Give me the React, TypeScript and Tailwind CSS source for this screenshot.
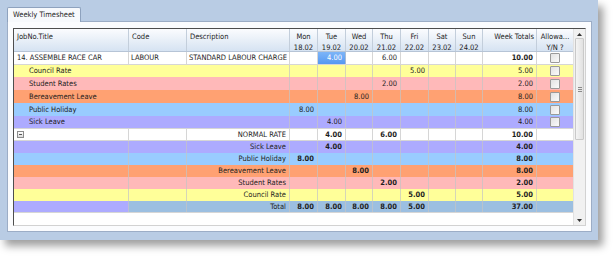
import type { ReactNode } from "react";

type Line = {
  label: string;
  color: string;
  days: (string | null)[];
  total: string;
  h: string;
};

const YELLOW = "bg-[#ffff99]";
const PINK = "bg-[#ffb9b9]";
const ORANGE = "bg-[#ffa172]";
const BLUE = "bg-[#99ccff]";
const LAVENDER = "bg-[#adabff]";

// Day columns are not quite even in the original grid.
const DAY_W = [
  "w-[28px]",
  "w-[28px]",
  "w-[27px]",
  "w-[28px]",
  "w-[28px]",
  "w-[27px]",
  "w-[27px]",
];

const DAYS = [
  ["Mon", "18.02"],
  ["Tue", "19.02"],
  ["Wed", "20.02"],
  ["Thu", "21.02"],
  ["Fri", "22.02"],
  ["Sat", "23.02"],
  ["Sun", "24.02"],
];

const at = (i: number, v: string) =>
  Array.from({ length: 7 }, (_, n) => (n === i ? v : null));

const detail: Line[] = [
  { label: "Council Rate", color: YELLOW, days: at(4, "5.00"), total: "5.00", h: "h-[12px]" },
  { label: "Student Rates", color: PINK, days: at(3, "2.00"), total: "2.00", h: "h-[13px]" },
  { label: "Bereavement Leave", color: ORANGE, days: at(2, "8.00"), total: "8.00", h: "h-[13px]" },
  { label: "Public Holiday", color: BLUE, days: at(0, "8.00"), total: "8.00", h: "h-[13px]" },
  { label: "Sick Leave", color: LAVENDER, days: at(1, "4.00"), total: "4.00", h: "h-[12px]" },
];

const summary: Line[] = [
  { label: "Sick Leave", color: LAVENDER, days: at(1, "4.00"), total: "4.00", h: "h-[12px]" },
  { label: "Public Holiday", color: BLUE, days: at(0, "8.00"), total: "8.00", h: "h-[12px]" },
  { label: "Bereavement Leave", color: ORANGE, days: at(2, "8.00"), total: "8.00", h: "h-[12px]" },
  { label: "Student Rates", color: PINK, days: at(3, "2.00"), total: "2.00", h: "h-[12px]" },
  { label: "Council Rate", color: YELLOW, days: at(4, "5.00"), total: "5.00", h: "h-[12px]" },
];

const LINE = "border-r border-[#c4c4c4]/70";

const Cell = ({
  w,
  right,
  bold,
  className = "",
  children,
}: {
  w: string;
  right?: boolean;
  bold?: boolean;
  className?: string;
  children?: ReactNode;
}) => (
  <div
    className={`flex h-full shrink-0 items-center overflow-hidden whitespace-nowrap ${w} ${LINE} ${
      right ? "justify-end pr-[3px]" : "pl-[2px]"
    } ${bold ? "font-bold" : ""} ${className}`}
  >
    {children}
  </div>
);

const Checkbox = () => (
  <span className="block h-[10px] w-[10px] rounded-[1px] border border-[#9a9a9a] bg-gradient-to-br from-[#e2e2e2] to-[#fbfbfb]" />
);

const DayCells = ({ days, bold }: { days: (string | null)[]; bold?: boolean }) => (
  <>
    {days.map((d, i) => (
      <Cell key={i} w={DAY_W[i]} right bold={bold}>
        {d}
      </Cell>
    ))}
  </>
);

const App = () => {
  return (
    <div className="h-[256px] w-[615px] overflow-hidden bg-white font-['DejaVu_Sans_Condensed','DejaVu_Sans',sans-serif] text-[7.5px] leading-none text-[#1d1d1d] [font-stretch:condensed]">
      <div className="h-[240px] w-[598px] bg-[#b9cce4] pl-[7px] pt-[7px] shadow-[5px_6px_8px_rgba(0,0,0,0.38)]">
        <div className="relative z-10 -mb-px flex h-[15px] w-[74px] items-center rounded-t-[2px] border border-b-0 border-[#8ea2be] bg-[#f7f9fc] pl-[5px]">
          Weekly Timesheet
        </div>
        <div className="h-[211px] w-[585px] border border-[#9cadc6] bg-[#fbfcfe] pl-[5px] pt-[6px]">
          <div className="flex h-[198px] w-[573px] border border-[#d2d2d2] border-l-[#4e4e4e] border-t-[#4e4e4e] bg-white">
            <div className="flex w-[559px] flex-col">
              {/* header */}
              <div className="flex h-[23px] shrink-0 border-b border-[#b6c4d6] bg-gradient-to-b from-[#fbfcfe] to-[#d6e3f2]">
                {[
                  ["w-[115px]", "JobNo.Title"],
                  ["w-[58px]", "Code"],
                  ["w-[103px]", "Description"],
                ].map(([w, t]) => (
                  <div key={t} className={`${w} shrink-0 border-r border-[#c3cedb] pl-[3px] pt-[4px]`}>
                    {t}
                  </div>
                ))}
                {DAYS.map(([d, n], i) => (
                  <div
                    key={d}
                    className={`${DAY_W[i]} flex shrink-0 flex-col items-center gap-[3px] border-r border-[#c3cedb] pt-[4px]`}
                  >
                    <span>{d}</span>
                    <span>{n}</span>
                  </div>
                ))}
                <div className="w-[54px] shrink-0 border-r border-[#c3cedb] pr-[2px] pt-[4px] text-right">
                  Week Totals
                </div>
                <div className="flex w-[36px] shrink-0 flex-col items-center gap-[3px] pt-[4px]">
                  <span>Allowa...</span>
                  <span>Y/N ?</span>
                </div>
              </div>

              {/* job line */}
              <div className="flex h-[13px] shrink-0 border-b border-[#d6d6d6] bg-white">
                <Cell w="w-[115px]" className="pl-[3px]">14. ASSEMBLE RACE CAR</Cell>
                <Cell w="w-[58px]">LABOUR</Cell>
                <Cell w="w-[103px]">STANDARD LABOUR CHARGE</Cell>
                <Cell w={DAY_W[0]} right />
                <Cell
                  w={DAY_W[1]}
                  right
                  className="bg-gradient-to-b from-[#7db5f8] to-[#5598f2] text-white"
                >
                  4.00
                </Cell>
                <Cell w={DAY_W[2]} right />
                <Cell w={DAY_W[3]} right>6.00</Cell>
                <Cell w={DAY_W[4]} right />
                <Cell w={DAY_W[5]} right />
                <Cell w={DAY_W[6]} right />
                <Cell w="w-[54px]" right bold>10.00</Cell>
                <div className="flex w-[36px] shrink-0 items-center justify-center">
                  <Checkbox />
                </div>
              </div>

              {detail.map((l) => (
                <div key={l.label} className={`flex ${l.h} shrink-0 ${l.color}`}>
                  <Cell w="w-[276px]" className="pl-[15px]">{l.label}</Cell>
                  <DayCells days={l.days} />
                  <Cell w="w-[54px]" right>{l.total}</Cell>
                  <div className="flex w-[36px] shrink-0 items-center justify-center">
                    <Checkbox />
                  </div>
                </div>
              ))}

              {/* rate summary */}
              <div className="flex h-[13px] shrink-0 border-y border-[#d6d6d6] bg-white">
                <Cell w="w-[115px]" className="pl-[3px]">
                  <span className="flex h-[7px] w-[7px] items-center justify-center border border-[#8c8c8c] bg-gradient-to-b from-white to-[#dcdcdc]">
                    <span className="h-px w-[3px] bg-[#555]" />
                  </span>
                </Cell>
                <Cell w="w-[58px]" />
                <Cell w="w-[103px]" right>NORMAL RATE</Cell>
                <DayCells days={[null, "4.00", null, "6.00", null, null, null]} bold />
                <Cell w="w-[54px]" right bold>10.00</Cell>
                <div className="w-[36px] shrink-0" />
              </div>

              {summary.map((l) => (
                <div key={l.label} className={`flex ${l.h} shrink-0 ${l.color}`}>
                  <Cell w="w-[115px]" />
                  <Cell w="w-[58px]" />
                  <Cell w="w-[103px]" right>{l.label}</Cell>
                  <DayCells days={l.days} bold />
                  <Cell w="w-[54px]" right bold>{l.total}</Cell>
                  <div className="w-[36px] shrink-0" />
                </div>
              ))}

              <div className="flex h-[12px] shrink-0 border-b border-[#d6d6d6] bg-[#9cbfe1]">
                <Cell w="w-[115px]" className="bg-[#adabff]" />
                <Cell w="w-[58px]" />
                <Cell w="w-[103px]" right>Total</Cell>
                <DayCells days={["8.00", "8.00", "8.00", "8.00", "5.00", null, null]} bold />
                <Cell w="w-[54px]" right bold>37.00</Cell>
                <div className="w-[36px] shrink-0" />
              </div>
            </div>

            {/* vertical scroll bar */}
            <div className="flex w-[12px] shrink-0 flex-col items-center border-l border-[#e2e2e2] bg-[#f1f1f1] py-[1px]">
              <div className="flex h-[8px] items-center justify-center">
                <svg width="5" height="3" viewBox="0 0 5 3">
                  <path d="M2.5 0 L5 3 L0 3 Z" fill="#333" />
                </svg>
              </div>
              <div className="flex h-[102px] w-[9px] items-center justify-center rounded-[1px] border border-[#c9c9c9] bg-gradient-to-r from-[#f4f4f4] to-[#e1e1e1]">
                <span className="flex flex-col gap-px">
                  <span className="h-px w-[4px] bg-[#8a8a8a]" />
                  <span className="h-px w-[4px] bg-[#8a8a8a]" />
                  <span className="h-px w-[4px] bg-[#8a8a8a]" />
                </span>
              </div>
              <div className="flex-1" />
              <div className="flex h-[8px] items-center justify-center">
                <svg width="5" height="3" viewBox="0 0 5 3">
                  <path d="M0 0 L5 0 L2.5 3 Z" fill="#333" />
                </svg>
              </div>
            </div>
          </div>
        </div>
      </div>
    </div>
  );
};

export default App;
